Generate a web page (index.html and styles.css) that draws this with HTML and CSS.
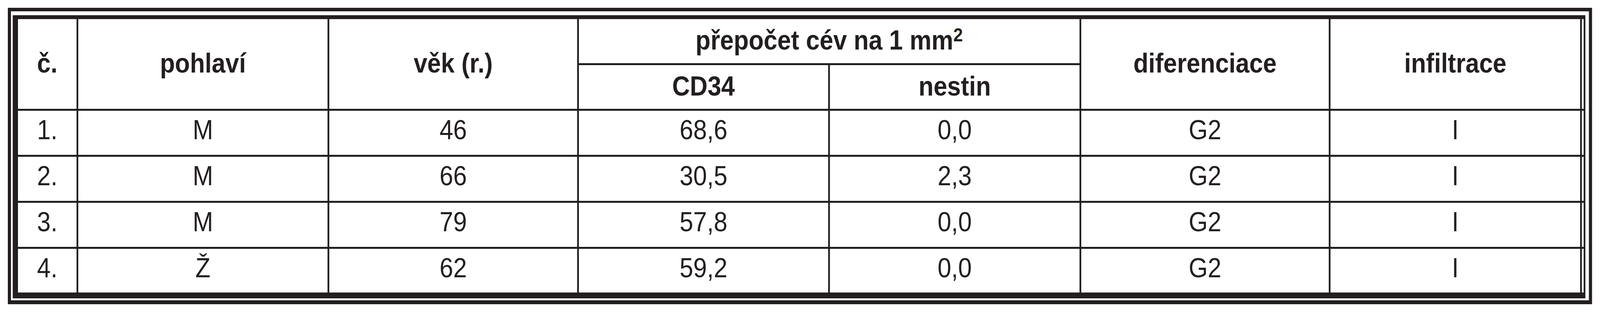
FILE: index.html
```html
<!DOCTYPE html>
<html lang="cs">
<head>
<meta charset="utf-8">
<title>Tabulka</title>
<link rel="stylesheet" href="styles.css">
</head>
<body>
<div class="stage">
  <div class="frame-outer" id="frame">
    <div class="frame-inner">
      <div class="grid">
        <div class="cell head r2">č.</div>
        <div class="cell head r2">pohlaví</div>
        <div class="cell head r2">věk (r.)</div>
        <div class="cell head c2"><span>přepočet cév na 1 mm<sup>2</sup></span></div>
        <div class="cell head r2">diferenciace</div>
        <div class="cell head r2">infiltrace</div>
        <div class="cell head r2"></div>
        <div class="cell head">CD34</div>
        <div class="cell head">nestin</div>

        <div class="cell">1.</div><div class="cell">M</div><div class="cell">46</div><div class="cell">68,6</div><div class="cell">0,0</div><div class="cell">G2</div><div class="cell">I</div><div class="cell"></div>
        <div class="cell">2.</div><div class="cell">M</div><div class="cell">66</div><div class="cell">30,5</div><div class="cell">2,3</div><div class="cell">G2</div><div class="cell">I</div><div class="cell"></div>
        <div class="cell">3.</div><div class="cell">M</div><div class="cell">79</div><div class="cell">57,8</div><div class="cell">0,0</div><div class="cell">G2</div><div class="cell">I</div><div class="cell"></div>
        <div class="cell">4.</div><div class="cell">Ž</div><div class="cell">62</div><div class="cell">59,2</div><div class="cell">0,0</div><div class="cell">G2</div><div class="cell">I</div><div class="cell"></div>
      </div>
    </div>
  </div>
</div>
<script src="script.js"></script>
</body>
</html>
```
FILE: styles.css
```css
html, body {
  margin: 0;
  padding: 0;
  background: #ffffff;
  overflow: hidden;
}

body {
  font-family: "Liberation Sans", Arial, "Noto Sans", sans-serif;
  color: #231f20;
}

.stage {
  width: 100%;
  height: 800px;
  overflow: hidden;
}

.frame-outer {
  width: fit-content;
  margin: 20px 0 0 20px;
  border: 9px solid #231f20;
  border-bottom-width: 10px;
  padding: 10px 10px 5px 5px;
  background: #ffffff;
  transform-origin: 0 0;
  transform: scaleX(var(--sx, 1));
}

.frame-inner {
  border-style: solid;
  border-color: #231f20;
  border-width: 10px 5px 15px 15px;
}

.grid {
  display: grid;
  grid-template-columns: 167px 711px 707px 711px 712px 706px 712px 5px;
  grid-template-rows: 113px 112px 113px 113px 113px 112px;
  gap: 5px;
  background: #231f20;
}

.cell {
  background: #ffffff;
  display: flex;
  align-items: center;
  justify-content: center;
  font-size: 70px;
  line-height: 1;
  padding-bottom: 15px;
  box-sizing: border-box;
  white-space: nowrap;
}

.head {
  font-weight: bold;
  padding-bottom: 5px;
}

.r2 {
  grid-row: span 2;
}

.c2 {
  grid-column: span 2;
}

sup {
  font-size: 49px;
  line-height: 0;
  vertical-align: 21px;
}
```
FILE: script.js
```js
(function () {
  var design = 4564;
  var sx = Math.min(1, window.innerWidth / design);
  document.documentElement.style.setProperty('--sx', sx);
})();
```
